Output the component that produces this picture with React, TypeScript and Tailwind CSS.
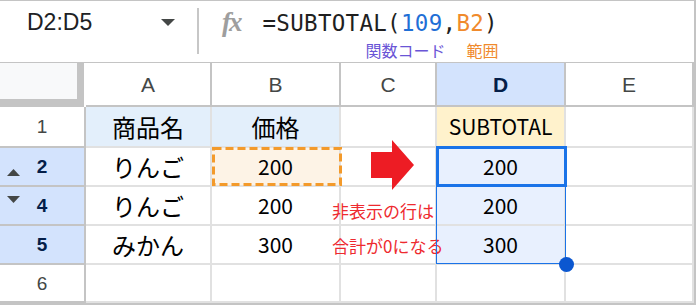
import React from "react";

const jp = { fontFamily: '"Noto Sans CJK JP", "Noto Sans", sans-serif' };
const arial = { fontFamily: '"Liberation Sans", Arial, sans-serif' };
const mono = { fontFamily: '"DejaVu Sans Mono", "Liberation Mono", monospace' };

type Cell = { text?: string; bg?: string };

const rows: { num: string; sel: boolean; h: string; cells: Cell[] }[] = [
  {
    num: "1",
    sel: false,
    h: "h-[41px]",
    cells: [
      { text: "商品名", bg: "bg-[#e3effb]" },
      { text: "価格", bg: "bg-[#e3effb]" },
      {},
      { text: "SUBTOTAL", bg: "bg-[#fff2cc]" },
      {},
    ],
  },
  {
    num: "2",
    sel: true,
    h: "h-[39px]",
    cells: [
      { text: "りんご" },
      { text: "200", bg: "bg-[#fdf3e6]" },
      {},
      { text: "200", bg: "bg-[#e8f0fe]" },
      {},
    ],
  },
  {
    num: "4",
    sel: true,
    h: "h-[39px]",
    cells: [
      { text: "りんご" },
      { text: "200" },
      {},
      { text: "200", bg: "bg-[#e8f0fe]" },
      {},
    ],
  },
  {
    num: "5",
    sel: true,
    h: "h-[39px]",
    cells: [
      { text: "みかん" },
      { text: "300" },
      {},
      { text: "300", bg: "bg-[#e8f0fe]" },
      {},
    ],
  },
  { num: "6", sel: false, h: "h-[38px]", cells: [{}, {}, {}, {}, {}] },
];

const colW = ["w-[126px]", "w-[129px]", "w-[96px]", "w-[129px]", "w-[128px]"];
const letters = ["A", "B", "C", "D", "E"];

function FormulaBar() {
  return (
    <div className="flex h-[62px] border-b border-[#c4c4c4]">
      <div className="w-[197px] h-[42px] flex items-center pl-[27px] pr-[22px]">
        <span style={arial} className="text-[23px] leading-none text-[#202124]">
          D2:D5
        </span>
        <svg className="ml-auto" width="14" height="7" viewBox="0 0 14 7">
          <polygon points="0,0 14,0 7,7" fill="#444746" />
        </svg>
      </div>
      <div className="w-[2px] h-[46px] mt-[7px] bg-[#c7c7c7]" />
      <div className="ml-[23px] h-[42px] flex items-center">
        <span
          className="italic font-bold text-[27px] leading-none text-[#9e9e9e] tracking-[-2px]"
          style={{ fontFamily: '"Liberation Serif", "DejaVu Serif", serif' }}
        >
          fx
        </span>
      </div>
      <div className="ml-[22px] flex flex-col">
        <div className="h-[44px] flex items-center">
          <span style={mono} className="text-[22.5px] leading-none text-[#1f1f1f] tracking-[0.3px]">
            =SUBTOTAL(<span className="text-[#1f6fd6]">109</span>,
            <span className="text-[#f08a2c]">B2</span>)
          </span>
        </div>
        <div style={jp} className="flex pl-[103px] text-[16px] leading-none -mt-[3px]">
          <span className="text-[#6a55d6]">関数コード</span>
          <span className="ml-[21px] text-[#f08a2c]">範囲</span>
        </div>
      </div>
    </div>
  );
}

function Grid() {
  return (
    <div className="relative">
      {/* header row */}
      <div className="flex h-[44px]">
        <div className="w-[86px] h-[44px] pr-[2px] bg-white">
          <div className="w-[84px] h-[44px] bg-[#f8f9fa] border-r-[7px] border-b-[8px] border-[#c4c4c4]" />
        </div>
        {letters.map((l, i) => (
          <div
            key={l}
            className={`${colW[i]} h-[44px] flex items-center justify-center border-r-2 border-b-2 border-[#c4c4c4] ${
              l === "D" ? "bg-[#d3e3fd] font-bold text-[#041e49]" : "bg-white text-[#444746]"
            }`}
          >
            <span style={arial} className="text-[21px] leading-none">
              {l}
            </span>
          </div>
        ))}
      </div>

      {rows.map((r) => (
        <div key={r.num} className={`flex ${r.h}`}>
          <div
            className={`relative w-[86px] flex items-center justify-center border-r-2 border-b-2 border-[#c4c4c4] ${
              r.sel ? "bg-[#d3e3fd] font-bold text-[#041e49]" : "bg-white text-[#444746]"
            }`}
          >
            <span style={arial} className="text-[19px] leading-none">
              {r.num}
            </span>
            {r.num === "2" && (
              <svg className="absolute left-[7px] top-[21px]" width="13" height="7" viewBox="0 0 13 7">
                <polygon points="6.5,0 13,7 0,7" fill="#444746" />
              </svg>
            )}
            {r.num === "4" && (
              <svg className="absolute left-[7px] top-[9px]" width="13" height="7" viewBox="0 0 13 7">
                <polygon points="0,0 13,0 6.5,7" fill="#444746" />
              </svg>
            )}
          </div>
          {r.cells.map((c, i) => (
            <div
              key={i}
              className={`${colW[i]} flex items-center justify-center border-r-2 border-b-2 border-[#e1e1e1] ${
                c.bg ?? "bg-white"
              }`}
            >
              {c.text && (
                <span
                  style={jp}
                  className={`leading-none text-black ${
                    c.text === "SUBTOTAL"
                      ? "text-[21px]"
                      : /^\d+$/.test(c.text)
                      ? "text-[21px]"
                      : "text-[24px]"
                  }`}
                >
                  {c.text}
                </span>
              )}
            </div>
          ))}
        </div>
      ))}

      {/* copy range on B2 */}
      <svg className="absolute left-[212px] top-[84px]" width="130" height="39" viewBox="0 0 130 39">
        <rect
          x="1.5"
          y="1.5"
          width="127"
          height="36"
          fill="none"
          stroke="#f39a2b"
          strokeWidth="3"
          strokeDasharray="8 4"
        />
      </svg>

      {/* red arrow */}
      <svg className="absolute left-[371px] top-[77px]" width="43" height="50" viewBox="0 0 43 50">
        <polygon points="0,12 21,12 21,0 43,25 21,50 21,38 0,38" fill="#ed1c24" />
      </svg>

      {/* note */}
      <div style={jp} className="absolute left-[332px] top-[139px] text-[17px] leading-none text-[#ee2a2f]">
        非表示の行は
      </div>
      <div style={jp} className="absolute left-[332px] top-[174px] text-[17px] leading-none text-[#ee2a2f]">
        合計が0になる
      </div>

      {/* selection */}
      <div className="absolute left-[436px] top-[83px] w-[130px] h-[118px] border border-[#1a73e8]" />
      <div className="absolute left-[436px] top-[83px] w-[131px] h-[41px] border-[3px] border-[#1a73e8]" />
      <div className="absolute left-[559px] top-[194px] w-[15px] h-[15px] rounded-full bg-[#0b57d0]" />
    </div>
  );
}

export default function App() {
  return (
    <div className="w-[698px] h-[305px] bg-white">
      <div className="w-[696px] border-t border-r-2 border-b-2 border-[#c4c4c4]">
        <FormulaBar />
        <Grid />
      </div>
    </div>
  );
}
